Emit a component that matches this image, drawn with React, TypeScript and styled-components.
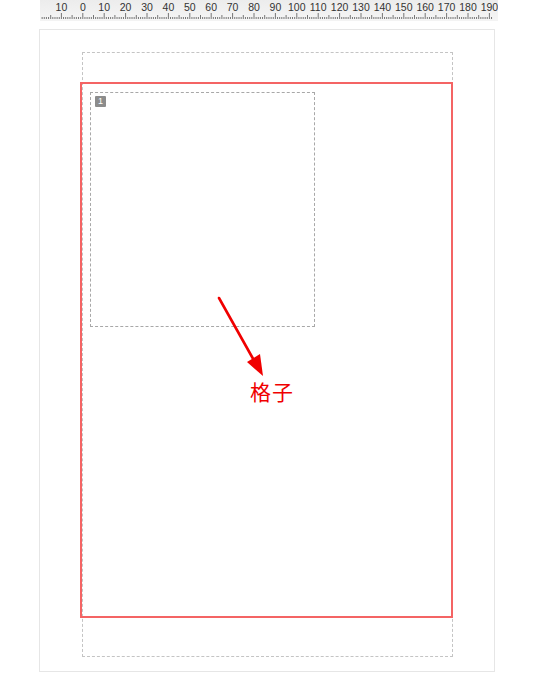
import React from 'react'
import styled, { createGlobalStyle } from 'styled-components'

const MM = 2.14
const ORIGIN = 42.8
const RULER_W = 458

const GlobalStyle = createGlobalStyle`
  html, body {
    margin: 0;
    padding: 0;
    background: #ffffff;
  }
  body {
    font-family: "Noto Sans", "Noto Sans CJK SC", sans-serif;
  }
`

function Ruler() {
  const ticks: React.ReactNode[] = []
  const labels: React.ReactNode[] = []
  for (let m = -20; m <= 191; m++) {
    const x = ORIGIN + m * MM
    if (x < 0.5 || x > RULER_W - 0.5) continue
    const h = m % 10 === 0 ? 6 : m % 5 === 0 ? 4 : 2
    ticks.push(
      <line
        key={m}
        x1={x}
        x2={x}
        y1={19 - h}
        y2={19}
        stroke="#555"
        strokeWidth={0.8}
      />
    )
    if (m % 10 === 0 && m > -20) {
      labels.push(
        <text
          key={`l${m}`}
          x={x}
          y={11}
          textAnchor="middle"
          fontSize={10.5}
          fill="#333"
          fontFamily='"Liberation Sans", Arial, sans-serif'
        >
          {Math.abs(m)}
        </text>
      )
    }
  }
  return (
    <RulerBar>
      <svg width={RULER_W} height={20} viewBox={`0 0 ${RULER_W} 20`}>
        {ticks}
        {labels}
      </svg>
    </RulerBar>
  )
}

export default function App() {
  return (
    <>
      <GlobalStyle />
      <Screen>
        <Ruler />
        <Page>
          <MarginGuide />
          <GridFrame>
            <Cell>
              <CellBadge>1</CellBadge>
            </Cell>
          </GridFrame>
          <Arrow width="60" height="90" viewBox="0 0 60 90">
            <line
              x1="2"
              y1="2"
              x2="39"
              y2="68"
              stroke="#f00000"
              strokeWidth="2.6"
              strokeLinecap="round"
            />
            <polygon points="46,80 30,66 43,58" fill="#f00000" />
          </Arrow>
          <Callout>格子</Callout>
        </Page>
      </Screen>
    </>
  )
}

const Screen = styled.div`
  display: flex;
  flex-direction: column;
  width: 541px;
  height: 693px;
  overflow: hidden;
  background: #ffffff;
`

const RulerBar = styled.div`
  margin-left: 40px;
  width: ${RULER_W}px;
  height: 20px;
  background: linear-gradient(180deg, #ececec 0%, #f5f5f5 100%);
  border-bottom: 1px solid #f3f3f3;

  svg {
    display: block;
  }
`

const Page = styled.div`
  position: relative;
  display: grid;
  grid-template-columns: 1fr;
  grid-template-rows: 1fr;
  box-sizing: border-box;
  margin-top: 8px;
  margin-left: 39px;
  width: 456px;
  height: 643px;
  border: 1px solid #e6e6e6;
  background: #ffffff;
`

const MarginGuide = styled.div`
  grid-area: 1 / 1;
  align-self: start;
  justify-self: start;
  box-sizing: border-box;
  margin: 22px 0 0 42px;
  width: 371px;
  height: 605px;
  border: 1px dashed #c4c4c4;
`

const GridFrame = styled.div`
  grid-area: 1 / 1;
  align-self: start;
  justify-self: start;
  box-sizing: border-box;
  margin: 52px 0 0 40px;
  width: 373px;
  height: 536px;
  padding: 8px;
  border: 2px solid #f46464;
`

const Cell = styled.div`
  display: flex;
  align-items: flex-start;
  box-sizing: border-box;
  width: 225px;
  height: 235px;
  padding: 3px 4px;
  border: 1px dashed #a8a8a8;
`

const CellBadge = styled.span`
  display: flex;
  align-items: center;
  justify-content: center;
  width: 11px;
  height: 11px;
  border-radius: 1px;
  background: #8c8c8c;
  color: #ffffff;
  font-family: "Liberation Sans", Arial, sans-serif;
  font-size: 9px;
  line-height: 1;
`

const Arrow = styled.svg`
  position: absolute;
  left: 177px;
  top: 266px;
  overflow: visible;
`

const Callout = styled.span`
  position: absolute;
  left: 210px;
  top: 348px;
  color: #f00000;
  font-family: "Noto Sans CJK SC", sans-serif;
  font-size: 21px;
  line-height: 1.3;
  letter-spacing: 1px;
`
